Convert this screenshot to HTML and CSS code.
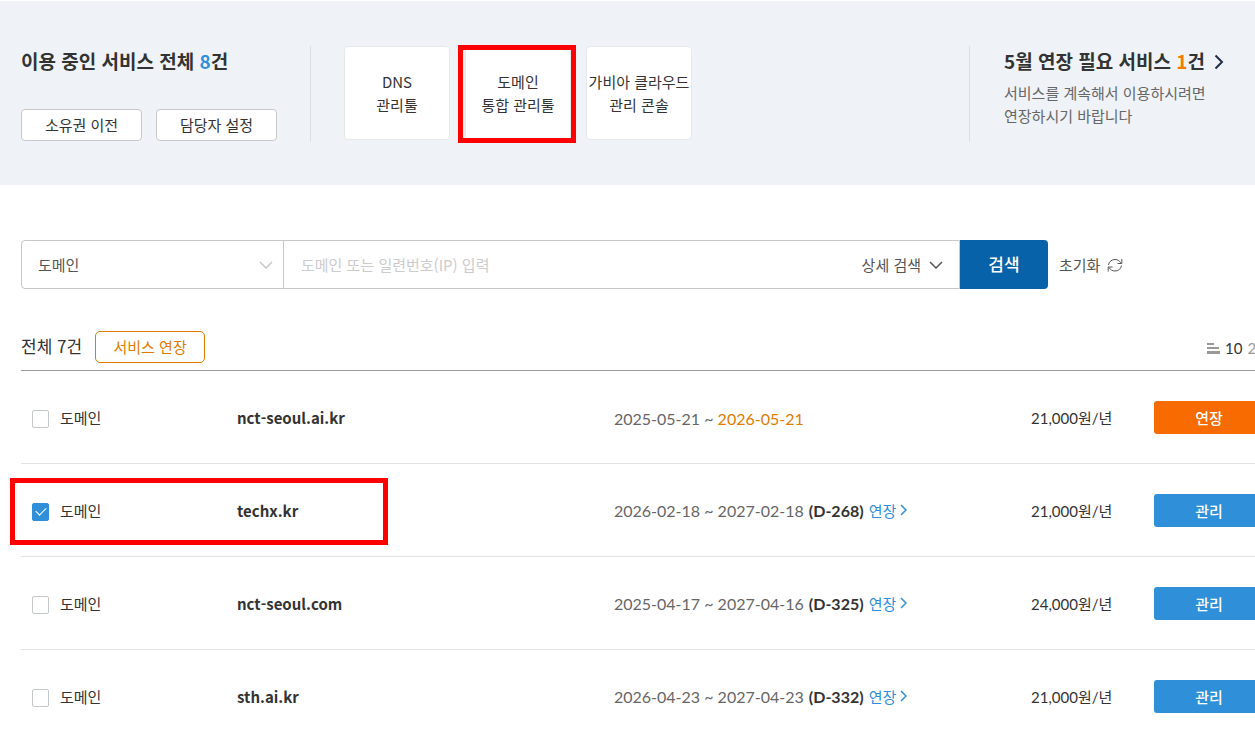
FILE: index.html
```html
<!DOCTYPE html>
<html lang="ko">
<head>
  <meta charset="UTF-8" />
  <meta name="viewport" content="width=device-width, initial-scale=1" />
  <title>서비스 관리</title>
  <link rel="stylesheet" href="styles.css">
</head>
<body>
  <header class="summary">
    <section class="summary-service">
      <h2>이용 중인 서비스 전체 <em class="blue">8</em>건</h2>
      <div class="summary-buttons">
        <button type="button" class="btn-line">소유권 이전</button>
        <button type="button" class="btn-line">담당자 설정</button>
      </div>
    </section>

    <nav class="tools">
      <a href="#" class="tool">DNS<br>관리툴</a>
      <a href="#" class="tool">도메인<br>통합 관리툴<span class="mark mark-tool"></span></a>
      <a href="#" class="tool">가비아 클라우드<br>관리 콘솔</a>
    </nav>

    <section class="summary-extend">
      <h2>
        <a href="#">5월 연장 필요 서비스 <em class="orange">1</em>건
          <svg class="title-arrow" viewBox="0 0 10 16"><path d="M1.500 1.500L8 8l-6.500 6.500"/></svg></a>
      </h2>
      <p>서비스를 계속해서 이용하시려면<br>연장하시기 바랍니다</p>
    </section>
  </header>

  <main class="content">
    <form class="search">
      <div class="search-box">
        <div class="search-type">
          <select aria-label="서비스 구분">
            <option>도메인</option>
          </select>
          <svg class="arrow-down" viewBox="0 0 14 8"><path d="M1 1l6 6 6-6"/></svg>
        </div>
        <input type="text" class="search-input" aria-label="검색어" placeholder="도메인 또는 일련번호(IP) 입력">
        <button type="button" class="btn-detail">상세 검색
          <svg class="arrow-down" viewBox="0 0 14 8"><path d="M1 1l6 6 6-6"/></svg>
        </button>
      </div>
      <button type="submit" class="btn-search">검색</button>
      <button type="reset" class="btn-reset">초기화
        <svg viewBox="0 0 16 16"><path d="M1.500 8C2 4.500 4.800 2.500 8 2.500c2.600 0 4.600 1.200 5.800 3.300M14.800 2v4.500h-4.300M14.500 8.500c-.5 3.500-3.300 5.500-6.500 5.500-2.600 0-4.600-1.200-5.800-3.300M1.200 14.500V10h4.300"/></svg>
      </button>
    </form>

    <div class="list-head">
      <strong class="total">전체 7건</strong>
      <button type="button" class="btn-extend">서비스 연장</button>
      <div class="page-size">
        <svg viewBox="0 0 13 11"><path d="M0 0h7v2H0zM0 4h12v2H0zM0 8h13v3H0z"/></svg>
        <a href="#" class="on">10</a>
        <a href="#">20</a>
      </div>
    </div>

    <table class="list">
      <colgroup>
        <col class="col-type">
        <col class="col-name">
        <col class="col-period">
        <col class="col-price">
        <col class="col-manage">
      </colgroup>
      <tbody>
        <tr>
          <td><label><input type="checkbox">도메인</label></td>
          <td class="name">nct-seoul.ai.kr</td>
          <td class="period">2025-05-21 ~ <span class="expire">2026-05-21</span></td>
          <td class="price">21,000원/년</td>
          <td><button type="button" class="btn-row btn-row-orange">연장</button></td>
        </tr>
        <tr>
          <td><label><input type="checkbox" checked>도메인</label><span class="mark mark-row"></span></td>
          <td class="name">techx.kr</td>
          <td class="period">2026-02-18 ~ 2027-02-18 <b>(D-268)</b> <a href="#">연장<svg viewBox="0 0 7 12"><path d="M1 1l5 5-5 5"/></svg></a></td>
          <td class="price">21,000원/년</td>
          <td><button type="button" class="btn-row">관리</button></td>
        </tr>
        <tr>
          <td><label><input type="checkbox">도메인</label></td>
          <td class="name">nct-seoul.com</td>
          <td class="period">2025-04-17 ~ 2027-04-16 <b>(D-325)</b> <a href="#">연장<svg viewBox="0 0 7 12"><path d="M1 1l5 5-5 5"/></svg></a></td>
          <td class="price">24,000원/년</td>
          <td><button type="button" class="btn-row">관리</button></td>
        </tr>
        <tr>
          <td><label><input type="checkbox">도메인</label></td>
          <td class="name">sth.ai.kr</td>
          <td class="period">2026-04-23 ~ 2027-04-23 <b>(D-332)</b> <a href="#">연장<svg viewBox="0 0 7 12"><path d="M1 1l5 5-5 5"/></svg></a></td>
          <td class="price">21,000원/년</td>
          <td><button type="button" class="btn-row">관리</button></td>
        </tr>
      </tbody>
    </table>
  </main>
</body>
</html>
```

FILE: styles.css
```css
* {
  box-sizing: border-box;
}

body {
  margin: 0;
  background: #fff;
  color: #333;
  font-family: "Noto Sans CJK KR", sans-serif;
  font-size: 15px;
  line-height: 23px;
  overflow-x: hidden;
}

a {
  color: inherit;
  text-decoration: none;
}

button, input, select {
  font: inherit;
  color: inherit;
  cursor: pointer;
}

em {
  font-style: normal;
}

svg {
  fill: none;
  stroke: currentColor;
}

h2 {
  margin: 0;
  font-size: 19px;
  line-height: 30px;
  font-weight: 700;
}

.blue {
  color: #2f8fd8;
}

.orange {
  color: #f57c00;
}

/* top area */
.summary {
  display: flex;
  padding: 45px 0 43px 21px;
  background: #eff3f8;
  border-top: 1px solid #fff;
}

.summary-service {
  width: 290px;
  height: 96px;
  border-right: 1px solid #dcdfe2;
}

.summary-buttons {
  display: flex;
  gap: 14px;
  margin-top: 33px;
}

.btn-line {
  width: 121px;
  height: 32px;
  padding: 0 0 2px;
  background: #fff;
  border: 1px solid #c8c8c8;
  border-radius: 4px;
}

.tools {
  display: flex;
  gap: 15px;
  margin-left: 33px;
}

.tool {
  position: relative;
  width: 106px;
  height: 94px;
  padding-top: 23px;
  background: #fff;
  border: 1px solid #e6e9ec;
  border-radius: 4px;
  text-align: center;
  white-space: nowrap;
}

.summary-extend {
  width: 286px;
  height: 96px;
  margin-left: auto;
  padding-left: 34px;
  border-left: 1px solid #dcdfe2;
  white-space: nowrap;
}

.summary-extend p {
  margin: 5px 0 0;
  color: #666;
}

.title-arrow {
  width: 10px;
  height: 16px;
  margin-left: 4px;
  color: #1f2d45;
  stroke-width: 2;
  vertical-align: -1px;
}

/* red guide boxes */
.mark {
  position: absolute;
  border: 5px solid #f00;
  pointer-events: none;
}

.mark-tool {
  inset: -2px -6px -4px -8px;
}

.mark-row {
  top: 14px;
  left: -11px;
  width: 378px;
  height: 67px;
}

/* search */
.content {
  padding: 55px 0 0 21px;
}

.search {
  display: flex;
  color: #555;
}

.search-box {
  display: flex;
  flex: 0 1 939px;
  height: 49px;
  border: 1px solid #c8c8c8;
  border-radius: 4px 0 0 4px;
}

.search-type {
  display: grid;
  align-items: center;
  width: 262px;
  border-right: 1px solid #c8c8c8;
}

.search-type select {
  grid-area: 1 / 1;
  height: 47px;
  padding: 0 16px;
  appearance: none;
  background: none;
  border: 0;
}

.arrow-down {
  width: 14px;
  height: 8px;
  stroke-width: 1.5;
}

.search-type .arrow-down {
  grid-area: 1 / 1;
  justify-self: end;
  margin-right: 10px;
  color: #c4c8cc;
  pointer-events: none;
}

.search-input {
  flex: 1;
  min-width: 0;
  padding: 0 17px;
  background: none;
  border: 0;
}

.search-input::placeholder {
  color: #ccc;
}

.btn-detail {
  display: flex;
  align-items: center;
  gap: 8px;
  padding: 0 16px;
  background: none;
  border: 0;
}

.btn-search {
  width: 88px;
  padding: 0 0 2px;
  background: #0762aa;
  border: 0;
  border-radius: 0 4px 4px 0;
  color: #fff;
  font-size: 17px;
  font-weight: 500;
}

.btn-reset {
  display: flex;
  align-items: center;
  gap: 7px;
  padding: 0 11px;
  background: none;
  border: 0;
}

.btn-reset svg {
  width: 16px;
  height: 16px;
}

/* list */
.list-head {
  display: flex;
  align-items: center;
  margin-top: 42px;
  padding-bottom: 7px;
  border-bottom: 1px solid #999;
}

.total {
  padding-bottom: 3px;
  font-size: 17px;
  font-weight: 400;
}

.btn-extend {
  width: 110px;
  height: 32px;
  margin-left: 13px;
  padding: 0 0 2px;
  background: #fff;
  border: 1px solid #e07b00;
  border-radius: 5px;
  color: #e07b00;
}

.page-size {
  display: flex;
  align-items: center;
  gap: 5px;
  width: 48px;
  margin-left: auto;
  padding-top: 3px;
  color: #999;
  font-family: Lato, "Noto Sans CJK KR", sans-serif;
}

.page-size svg {
  flex: none;
  width: 13px;
  height: 11px;
  fill: #999;
  stroke: none;
}

.page-size .on {
  color: #333;
}

.list {
  width: 100%;
  border-collapse: separate;
  border-spacing: 0;
  table-layout: fixed;
}

.col-type {
  width: 216px;
}

.col-name {
  width: 377px;
}

.col-price {
  width: 123px;
}

.col-manage {
  width: 101px;
}

.list td {
  position: relative;
  height: 93px;
  padding: 0;
  border-bottom: 1px solid #e2e2e2;
}

.list label {
  display: flex;
  align-items: center;
  gap: 11px;
  padding-left: 11px;
}

.list input {
  width: 17px;
  height: 18px;
  margin: 3px 0 0;
  appearance: none;
  background: #fff;
  border: 1px solid #c4c8c8;
  border-radius: 2px;
}

.list input:checked {
  display: grid;
  place-items: center;
  background: #2f8fd8;
  border-color: #2f8fd8;
}

.list input:checked::after {
  content: "";
  width: 9px;
  height: 5px;
  margin-bottom: 3px;
  border: solid #fff;
  border-width: 0 0 1px 1px;
  transform: rotate(-45deg);
}

.list .name {
  font-weight: 700;
}

.period, .price {
  font-family: Lato, "Noto Sans CJK KR", sans-serif;
}

.list .price {
  padding-top: 2px;
}

.list .period {
  padding-top: 2px;
  color: #666;
  font-size: 16px;
  white-space: nowrap;
}

.period b {
  margin: 0 1px;
  color: #333;
}

.period a {
  color: #2f8fd8;
  font-size: 15px;
}

.period svg {
  width: 7px;
  height: 12px;
  margin-left: 4px;
  stroke-width: 1.5;
  vertical-align: 1px;
}

.expire {
  color: #e07b00;
}

.btn-row {
  display: block;
  width: 110px;
  height: 33px;
  padding: 0;
  background: #2f8fd8;
  border: 0;
  border-radius: 3px;
  color: #fff;
  font-weight: 500;
}

.btn-row-orange {
  background: #f76b00;
}
```
